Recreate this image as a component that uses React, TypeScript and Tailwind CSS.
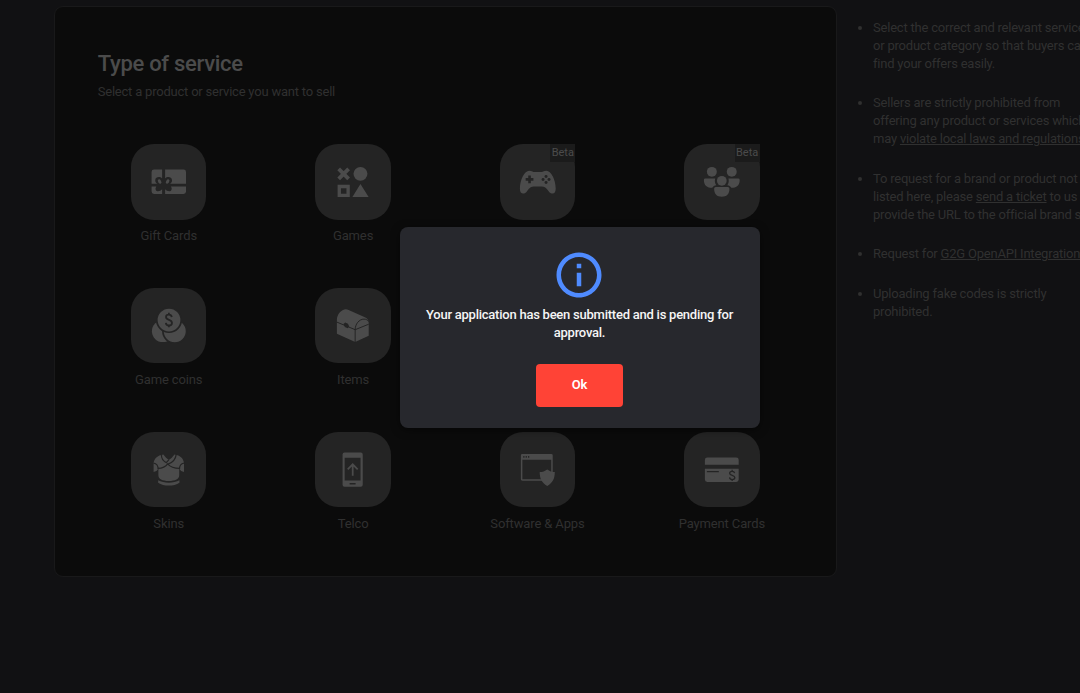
import React from "react";

const GiftCardIcon = () => (
  <>
    <path d="M23.2 25.7h8.1v9.1c-2.2-2.5-6.6-1.8-6.9 1.3-.2 1.7.7 3.1 2.2 3.9h-5.9V28.2a2.5 2.5 0 0 1 2.5-2.5zM34.3 25.7h18.5a2.5 2.5 0 0 1 2.5 2.5V40H39c1.5-.8 2.5-2.2 2.2-3.9-.4-3.1-4.7-3.8-6.9-1.3zM20.7 42.8h4.8c-1.2 1.5-1.2 3.2.2 4.4 2.3.7 4.2-.3 5.6-1.8v4.9h-8.1a2.5 2.5 0 0 1-2.5-2.5zM40.1 42.8h15.2v5a2.5 2.5 0 0 1-2.5 2.5H34.3v-4.9c1.4 1.5 3.3 2.5 5.6 1.8 1.3-1.2 1.4-2.9.2-4.4z" />
    <ellipse cx="28.8" cy="37.8" rx="1.5" ry="2.4" transform="rotate(-32 28.8 37.8)" />
    <ellipse cx="36.8" cy="37.8" rx="1.5" ry="2.4" transform="rotate(32 36.8 37.8)" />
  </>
);

const GamesIcon = () => (
  <>
    <path d="M23.8 25.1l10 10M33.8 25.1l-10 10" stroke="currentColor" strokeWidth="3.9" />
    <circle cx="45.7" cy="30" r="7" />
    <path fillRule="evenodd" d="M22.7 41H35v12.3H22.7zM26.1 44.4v5.5h5.5v-5.5zM45.7 40.2l8.2 13.1H37.6z" />
  </>
);

const AccountsIcon = () => (
  <>
    <path d="M29.3 26.8c2.7 0 4 1.4 5.7 1.4h6c1.7 0 3-1.4 5.7-1.4 4.5 0 9.3 8.5 9.3 18.2 0 6-4.6 6.1-7.3 2.2-2.1-3-4.2-4.4-6.7-4.4h-8c-2.5 0-4.6 1.4-6.7 4.4C24.6 51.1 20 51 20 45c0-9.700 4.800-18.200 9.300-18.200z" />
    <g className="text-[#242424]">
      <path d="M29.700 31.700v7.800M25.800 35.600h7.800" stroke="currentColor" strokeWidth="2.600" />
      <g fill="currentColor">
        <circle cx="46.300" cy="32.600" r="1.500" />
        <circle cx="46.300" cy="38.600" r="1.500" />
        <circle cx="43.300" cy="35.600" r="1.500" />
        <circle cx="49.300" cy="35.600" r="1.500" />
      </g>
    </g>
  </>
);

const BoostingIcon = () => (
  <>
    <circle cx="28" cy="28" r="5" />
    <circle cx="48" cy="28" r="5" />
    <circle cx="38" cy="37" r="4.9" />
    <path d="M21.5 34.7h9.9c-.8 2.5-.4 4.9 1.1 6.7-2.2.3-3.6 1.2-4 2.7-5 .1-8.5-2.3-8.5-7.9a1.5 1.5 0 0 1 1.5-1.5zM54.5 34.7h-9.9c.8 2.500.4 4.900-1.100 6.700 2.200.3 3.600 1.200 4 2.700 5 .1 8.500-2.300 8.500-7.900a1.500 1.500 0 0 0-1.500-1.500zM32 43.300h12a1.700 1.700 0 0 1 1.700 1.700c0 5.500-2.900 8-7.700 8s-7.700-2.500-7.700-8a1.700 1.700 0 0 1 1.700-1.700z" />
  </>
);

const CoinsIcon = () => (
  <>
    <circle cx="32" cy="43.4" r="11" />
    <circle cx="44" cy="43.4" r="11.9" stroke="#242424" strokeWidth="1.7" />
    <circle cx="38.2" cy="32.2" r="12.3" stroke="#242424" strokeWidth="1.7" />
    <path
      d="M41 29.2c-.3-1.6-1.3-2.4-2.9-2.4-1.7 0-2.9.9-2.9 2.4 0 1.7 1.3 2.3 3 2.9 1.8.6 3 1.3 3 3.1 0 1.6-1.2 2.5-3 2.5s-3-.9-3.2-2.7M38.1 25v1.8M38.1 37.7v1.8"
      fill="none"
      stroke="#242424"
      strokeWidth="1.8"
    />
  </>
);

const ItemsIcon = () => (
  <>
    <path d="M22 32c0-5.500 4.500-10.700 9-10.700 1 0 1.900.3 2.800.8l15.200 6.900c3.200 1.200 5 3 5 6v13l-13.600 6.300L22 46z" />
    <path
      d="M22 34.300l18.400 7.600L54 36.400M40.400 54.500V41.900c0-5.700 4-10.600 8.800-10.600 2.200 0 3.800.8 4.600 2.400"
      fill="none"
      stroke="#242424"
      strokeWidth="1"
    />
    <path d="M28.600 36.200l1.800-1.400 2.700 1.200 1.300 2.700-1.600 1.800-2.800-1.300z" fill="#242424" />
  </>
);

const SkinsIcon = () => (
  <>
    <path d="M28.5 23.7l4-1.2 2.700 3.400 2.900 2.300 2.900-2.300 2.700-3.400 4 1.200c3.300 1.500 5.600 4.600 5.600 8.500v8l-2.800-1-2-2v6.100c0 4.100-4 6-10.500 6s-10.500-1.900-10.500-6v-6.100l-2 2-2.800 1v-8c0-3.900 2.500-7 5.800-8.500z" />
    <path
      d="M30.600 22c-.3 4 2 7.500 5.400 9M45.600 22c-.6 5-3.600 9-8.900 10.500M38 28l-2.300 2.600M22.500 31.200c3.600.7 4.900 3.200 4.700 6.400M53.500 31.200c-3.600.7-4.900 3.200-4.700 6.400M27 36.600c4.500-.2 7.900-1.800 9.900-4.600 2.400 3 6.300 4.600 12.100 4.600"
      fill="none"
      stroke="#242424"
      strokeWidth="1.200"
    />
    <path d="M27.300 48.500c5.800 3.300 15.600 3.300 21.400 0v2.400c-5.500 3.900-15.900 3.900-21.400 0z" />
  </>
);

const TelcoIcon = () => (
  <>
    <path
      fillRule="evenodd"
      d="M29.700 20.700H46a2 2 0 0 1 2 2V53a2 2 0 0 1-2 2H29.700a2 2 0 0 1-2-2V22.700a2 2 0 0 1 2-2zM29.800 26v22.700h16V26zM34.800 51.300v1.500h6v-1.500z"
    />
    <path d="M37.900 44V32.700M32.900 37.500l5-5 5 5" fill="none" stroke="currentColor" strokeWidth="1.800" />
  </>
);

const SoftwareIcon = () => (
  <>
    <path
      fillRule="evenodd"
      d="M22.500 22h29a1.500 1.500 0 0 1 1.500 1.500v24a1.500 1.500 0 0 1-1.500 1.500h-29a1.500 1.500 0 0 1-1.500-1.500v-24a1.500 1.500 0 0 1 1.500-1.500zM22.500 28v19.500h29V28z"
    />
    <path d="M23.400 24.200h1.200v1.600h-1.200zM25.800 24.200H27v1.600h-1.200zM28.200 24.200h1.200v1.600h-1.200z" fill="#242424" />
    <path d="M47.500 37.700c2.300 1.700 4.700 2.500 7.600 2.600 0 6.600-2 10.900-7.600 13.900-5.600-3-7.600-7.300-7.600-13.900 2.900-.1 5.300-.9 7.600-2.600z" />
  </>
);

const PaymentIcon = () => (
  <>
    <path d="M23.500 25.700h29a2.500 2.500 0 0 1 2.500 2.500V33H21v-4.800a2.500 2.500 0 0 1 2.500-2.500zM21 37h34v10.800a2.500 2.500 0 0 1-2.500 2.500h-29a2.500 2.500 0 0 1-2.500-2.500z" />
    <path
      d="M23 39.900h12M50.900 41.400c-.3-1.200-1.200-1.900-2.500-1.900-1.500 0-2.500.8-2.500 1.900 0 1.300 1.100 1.700 2.600 2.100 1.500.5 2.600 1 2.600 2.300s-1.100 2-2.600 2-2.500-.8-2.700-2.100M48.400 38v1.500M48.400 47.800v1.500"
      fill="none"
      stroke="#242424"
      strokeWidth="1.300"
    />
  </>
);

const services = [
  { name: "Gift Cards", icon: <GiftCardIcon /> },
  { name: "Games", icon: <GamesIcon /> },
  { name: "Accounts", icon: <AccountsIcon />, beta: true },
  { name: "Boosting", icon: <BoostingIcon />, beta: true },
  { name: "Game coins", icon: <CoinsIcon /> },
  { name: "Items", icon: <ItemsIcon /> },
  null,
  null,
  { name: "Skins", icon: <SkinsIcon /> },
  { name: "Telco", icon: <TelcoIcon /> },
  { name: "Software & Apps", icon: <SoftwareIcon /> },
  { name: "Payment Cards", icon: <PaymentIcon /> },
];

const App = () => {
  return (
    <div className="relative h-[693px] w-full overflow-hidden bg-[#111113] font-['Roboto',sans-serif] text-[13px] leading-[18px] tracking-[-0.21px] text-[#303030]">
      <div className="flex pl-[54px] pt-[6px]">
        {/* SERVICES */}
        <div className="h-[571px] w-[783px] shrink-0 rounded-[9px] border border-[#19191a] bg-[#0b0b0b] pl-[21.5px] pt-[43px]">
          <div className="pl-[21.2px]">
            <h1 className="text-[22px] font-medium leading-[28px] tracking-[-0.3px] text-[#4b4b4b]">
              Type of service
            </h1>
            <p className="mt-[5px]">Select a product or service you want to sell</p>
          </div>
          <div className="mt-[43px] grid grid-cols-[repeat(4,184.4px)] auto-rows-[143.9px]">
            {services.map((service, index) =>
              service ? (
                <div key={index} className="flex flex-col items-center">
                  <div className="relative size-[75.6px] overflow-hidden rounded-[23px] bg-[#242424] text-[#4b4b4b]">
                    <svg viewBox="0 0 76 76" className="size-full" fill="currentColor">
                      {service.icon}
                    </svg>
                  </div>
                  {service.beta && (
                    <span className="relative -mt-[75.6px] mb-[57.6px] ml-[50.6px] h-[18px] w-[25px] bg-[#1b1b1b] text-center text-[11px] leading-[17px] tracking-normal text-[#4b4b4b]">
                      Beta
                    </span>
                  )}
                  <p className="mt-[7.4px] whitespace-nowrap tracking-[-0.13px]">{service.name}</p>
                </div>
              ) : (
                <div key={index} />
              )
            )}
          </div>
        </div>

        {/* GUIDELINES */}
        <ul className="ml-[36px] mt-[12.7px] flex shrink-0 list-disc flex-col gap-[21.6px] whitespace-nowrap">
          <li>
            Select the correct and relevant service
            <br />
            or product category so that buyers can
            <br />
            find your offers easily.
          </li>
          <li>
            Sellers are strictly prohibited from
            <br />
            offering any product or services which
            <br />
            may <a className="underline">violate local laws and regulations</a>.
          </li>
          <li>
            To request for a brand or product not
            <br />
            listed here, please <a className="underline">send a ticket</a> to us and
            <br />
            provide the URL to the official brand site.
          </li>
          <li>
            Request for <a className="underline">G2G OpenAPI Integration</a>.
          </li>
          <li>
            Uploading fake codes is strictly
            <br />
            prohibited.
          </li>
        </ul>
      </div>

      {/* DIALOG */}
      <div className="absolute left-[400px] top-[227px] flex h-[201px] w-[360px] flex-col items-center rounded-[8px] bg-[#27282d] pr-px pt-[21px] text-center text-[#f5f5f5] shadow-[0_2px_8px_rgba(0,0,0,0.5)]">
        <svg viewBox="0 0 24 24" className="mr-px size-[54px] text-[#4f8bff]" fill="currentColor">
          <path d="M11 7h2v2h-2zm0 4h2v6h-2zm1-9C6.480 2 2 6.480 2 12s4.480 10 10 10 10-4.480 10-10S17.520 2 12 2zm0 18c-4.410 0-8-3.590-8-8s3.590-8 8-8 8 3.590 8 8-3.590 8-8 8z" />
        </svg>
        <p className="mt-[4px] w-[324px] font-medium tracking-[-0.24px]">
          Your application has been submitted and is pending for approval.
        </p>
        <button className="mt-[22px] h-[43px] w-[87px] rounded-[4px] bg-[#ff4336] pb-[2px] font-semibold text-white">
          Ok
        </button>
      </div>
    </div>
  );
};

export default App;
